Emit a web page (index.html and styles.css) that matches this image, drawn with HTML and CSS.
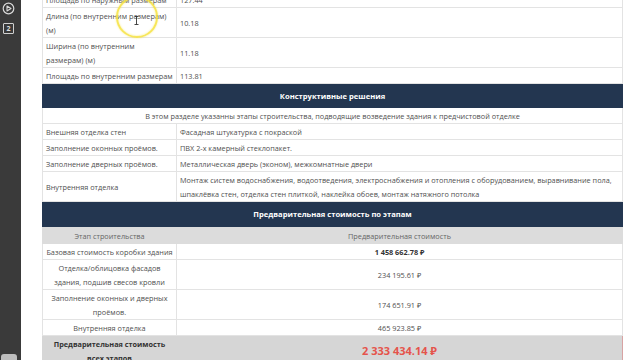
FILE: index.html
```html
<!DOCTYPE html>
<html lang="ru">
<head>
<meta charset="utf-8">
<title>Смета</title>
<link rel="stylesheet" href="styles.css">
</head>
<body>
<div class="app">
  <aside class="sidebar">
    <svg class="ico" width="13" height="13" viewBox="0 0 13 13">
      <circle cx="6.5" cy="6.5" r="5.3" fill="none" stroke="#d8d8d8" stroke-width="1.2"/>
      <path d="M5 4 L9 6.5 L5 9 Z" fill="none" stroke="#d8d8d8" stroke-width="1.1" stroke-linejoin="round"/>
    </svg>
    <div class="badge">2</div>
    <div class="side-bottom"></div>
  </aside>
  <main class="content">
    <table class="spec">
      <colgroup><col class="c1"><col class="c2"></colgroup>
      <tbody>
        <tr><td>Площадь по наружным размерам</td><td>127.44</td></tr>
        <tr><td>Длина (по внутренним размерам)<br>(м)</td><td>10.18</td></tr>
        <tr><td>Ширина (по внутренним<br>размерам) (м)</td><td>11.18</td></tr>
        <tr><td>Площадь по внутренним размерам</td><td>113.81</td></tr>
        <tr><td class="sec" colspan="2">Конструктивные решения</td></tr>
        <tr><td class="intro" colspan="2">В этом разделе указанны этапы строительства, подводящие возведение здания к предчистовой отделке</td></tr>
        <tr><td>Внешняя отделка стен</td><td>Фасадная штукатурка с покраской</td></tr>
        <tr><td>Заполнение оконных проёмов.</td><td>ПВХ 2-х камерный стеклопакет.</td></tr>
        <tr><td>Заполнение дверных проёмов.</td><td>Металлическая дверь (эконом), межкомнатные двери</td></tr>
        <tr><td>Внутренняя отделка</td><td>Монтаж систем водоснабжения, водоотведения, электроснабжения и отопления с оборудованием, выравнивание пола,<br>шпаклёвка стен, отделка стен плиткой, наклейка обоев, монтаж натяжного потолка</td></tr>
        <tr><td class="sec sec2" colspan="2">Предварительная стоимость по этапам</td></tr>
        <tr class="head"><td>Этап строительства</td><td>Предварительная стоимость</td></tr>
        <tr class="cost"><td>Базовая стоимость коробки здания</td><td><b>1 458 662.78 ₽</b></td></tr>
        <tr class="cost"><td>Отделка/облицовка фасадов<br>здания, подшив свесов кровли</td><td>234 195.61 ₽</td></tr>
        <tr class="cost"><td>Заполнение оконных и дверных<br>проёмов.</td><td>174 651.91 ₽</td></tr>
        <tr class="cost"><td>Внутренняя отделка</td><td>465 923.85 ₽</td></tr>
        <tr class="total"><td>Предварительная стоимость<br>всех этапов</td><td class="sum">2 333 434.14 ₽</td></tr>
      </tbody>
    </table>
  </main>
  <div class="ring"></div>
  <svg class="ibeam" width="5" height="9" viewBox="0 0 5 9">
    <path d="M0.5 0.5 H4.5 M2.5 0.5 V8.5 M0.5 8.5 H4.5" stroke="#333" stroke-width="0.9" fill="none"/>
  </svg>
</div>
</body>
</html>
```
FILE: styles.css
```css
html, body {
  margin: 0;
  padding: 0;
}
body {
  width: 640px;
  height: 360px;
  overflow: hidden;
  background: #fff;
  font-family: "Open Sans", "Noto Sans", sans-serif;
}
.app {
  position: relative;
  display: flex;
  width: 640px;
  height: 360px;
  overflow: hidden;
}
.sidebar {
  flex: none;
  width: 21px;
  background: #3a3a3a;
  display: flex;
  flex-direction: column;
  align-items: center;
  padding-top: 2px;
  box-sizing: border-box;
}
.ico {
  display: block;
  margin-left: -4px;
}
.badge {
  margin-top: 8px;
  margin-left: -4px;
  width: 9px;
  height: 9px;
  border: 1px solid #d0d0d0;
  border-radius: 1px;
  color: #e0e0e0;
  font-size: 7px;
  line-height: 9px;
  text-align: center;
  font-weight: 700;
}
.side-bottom {
  margin-top: auto;
  width: 16px;
  height: 6px;
  margin-left: -3px;
  background: #bdbdbd;
  border-radius: 3px 3px 0 0;
}
.content {
  flex: 1;
  padding-left: 21px;
}
.spec {
  margin-top: -9px;
  width: 581px;
  border-collapse: collapse;
  table-layout: fixed;
  font-size: 7.3px;
  line-height: 14px;
  color: #4f4f4f;
}
.spec col.c1 { width: 134px; }
.spec td {
  border: 1px solid #e3e3e3;
  padding: 1px 3px 0;
  vertical-align: middle;
  white-space: nowrap;
}
.spec td.sec {
  background: #233650;
  border-color: #233650;
  color: #fff;
  font-weight: 700;
  font-size: 7.6px;
  text-align: center;
  height: 23px;
  padding: 0;
}
.spec td.sec2 {
  height: 24px;
  border-top: 1px solid #c9a9aa;
}
.spec td.intro {
  text-align: center;
}
.spec tr.head td {
  background: #dcdcdc;
  color: #666;
  text-align: center;
  border-color: #dcdcdc;
  height: 15px;
}
.spec tr.cost td {
  text-align: center;
}
.spec tr.cost td b {
  font-weight: 700;
  color: #333;
}
.spec tr.total td {
  background: #d6d6d6;
  color: #333;
  font-weight: 700;
  text-align: center;
  border-color: #d6d6d6;
}
.spec tr.total td.sum {
  color: #e5534b;
  font-size: 11px;
  border: 1px solid #d8a3a3;
}
.ring {
  position: absolute;
  left: 116px;
  top: -4px;
  width: 38px;
  height: 38px;
  border-radius: 50%;
  border: 2.5px solid rgba(246, 226, 60, 0.85);
  box-shadow: 0 0 2px rgba(246, 226, 60, 0.6), inset 0 0 2px rgba(246, 226, 60, 0.6);
}
.ibeam {
  position: absolute;
  left: 134px;
  top: 16px;
}
```
